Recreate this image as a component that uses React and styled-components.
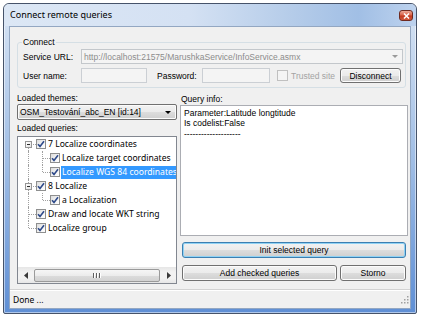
import React from 'react';
import styled, { createGlobalStyle } from 'styled-components';

const ui = `"Liberation Sans", Arial, sans-serif`;
const segoe = `"Noto Sans", "Open Sans", sans-serif`;

const GlobalStyle = createGlobalStyle`
  html, body { margin: 0; padding: 0; background: #fff; }
  body { font-family: ${ui}; }
  * { box-sizing: border-box; }
`;

const Window = styled.div`
  margin: 3px 0 0 3px;
  width: 414px;
  height: 311px;
  border: 1px solid #46536a;
  border-radius: 6px 6px 2px 2px;
  background: linear-gradient(180deg, #d9e5f4 0, #c9daf0 40px, #9fbde5 160px, #5f8fd5 100%);
  box-shadow: inset 0 0 0 1px rgba(255, 255, 255, 0.5);
  display: flex;
  flex-direction: column;
  padding: 0 5px 4px 5px;
  overflow: hidden;
`;

const TitleBar = styled.div`
  height: 22px;
  margin: 0 -5px;
  padding: 0 3px 0 6px;
  display: flex;
  align-items: flex-start;
  justify-content: space-between;
  background: linear-gradient(90deg, #dce7f5 0%, #d4e1f3 45%, #b5cce9 70%, #a1bfe5 86%, #bdd2ee 100%);
  border-radius: 5px 5px 0 0;
`;

const Title = styled.span`
  font-family: ${segoe};
  font-size: 9px;
  line-height: 22px;
  color: #000;
`;

const CloseButton = styled.div`
  margin-top: 6px;
  width: 14px;
  height: 11px;
  border: 1px solid #6f2a20;
  border-radius: 3px;
  background: linear-gradient(180deg, #eba897 0%, #d9634b 45%, #c23a20 55%, #d0573c 100%);
  display: flex;
  align-items: center;
  justify-content: center;
`;

const Client = styled.div`
  flex: 1;
  background: #f0f0f0;
  border: 1px solid #93a7c2;
  display: flex;
  flex-direction: column;
  font-family: ${ui};
  font-size: 8.5px;
  color: #000;
`;

const Group = styled.div`
  position: relative;
  margin: 15px 4px 0 7px;
  border: 1px solid #d5dfe5;
  border-radius: 3px;
  padding: 6px 2px 4px 5px;
  display: flex;
  flex-direction: column;
  gap: 4px;
`;

const GroupTitle = styled.span`
  position: absolute;
  top: -6px;
  left: 4px;
  padding: 0 1px;
  background: #f0f0f0;
  line-height: 11px;
`;

const FormRow = styled.div`
  display: flex;
  align-items: center;
  height: 15px;
`;

const Label = styled.span`
  width: ${(p) => p.$w || 'auto'};
  margin-left: ${(p) => p.$ml || '0'};
  color: ${(p) => (p.$disabled ? '#a3a3a3' : '#000')};
  white-space: nowrap;
  flex: none;
`;

const DisabledCombo = styled.div`
  flex: 1;
  height: 15px;
  border: 1px solid #c3c7cb;
  background: #f4f4f4;
  color: #8c8c8c;
  display: flex;
  align-items: center;
  justify-content: space-between;
  padding: 0 4px 0 2px;
`;

const Arrow = styled.span`
  width: 0;
  height: 0;
  border-left: ${(p) => p.$size}px solid transparent;
  border-right: ${(p) => p.$size}px solid transparent;
  border-top: ${(p) => p.$size}px solid ${(p) => p.$color};
`;

const TextBox = styled.div`
  width: ${(p) => p.$w}px;
  height: 15px;
  flex: none;
  border: 1px solid #cbcfd4;
  background: #f4f4f4;
`;

const CheckBox = styled.span`
  width: ${(p) => p.$size || 11}px;
  height: ${(p) => p.$size || 11}px;
  flex: none;
  margin-left: ${(p) => p.$ml || '0'};
  border: 1px solid ${(p) => (p.$disabled ? '#c0c0c0' : '#8e8f8f')};
  background: ${(p) =>
    p.$disabled ? '#f4f4f4' : 'linear-gradient(135deg, #dcdcdc 0%, #f4f4f4 60%, #fff 100%)'};
  display: flex;
  align-items: center;
  justify-content: center;
`;

const Button = styled.div`
  width: ${(p) => (p.$w ? `${p.$w}px` : 'auto')};
  flex: ${(p) => (p.$grow ? 1 : 'none')};
  height: ${(p) => p.$h || 15}px;
  margin-right: ${(p) => p.$mr || '0'};
  border: 1px solid ${(p) => (p.$focus ? '#3c7fb1' : '#707070')};
  border-radius: 3px;
  background: linear-gradient(180deg, #f2f2f2 0%, #ebebeb 50%, #dddddd 51%, #cfcfcf 100%);
  box-shadow: ${(p) => (p.$focus ? 'inset 0 0 0 1px #8fd2f4' : 'inset 0 0 0 1px #fcfcfc')};
  display: flex;
  align-items: center;
  justify-content: center;
  white-space: nowrap;
`;

const Spacer = styled.div`
  flex: 1;
`;

const Main = styled.div`
  flex: 1;
  display: flex;
  padding: 5px 2px 0 7px;
  gap: 3px;
`;

const Column = styled.div`
  width: ${(p) => p.$w}px;
  display: flex;
  flex-direction: column;
`;

const FieldLabel = styled.div`
  height: ${(p) => p.$h}px;
  line-height: ${(p) => p.$lh || p.$h}px;
  padding-left: ${(p) => p.$pl || 0}px;
  white-space: nowrap;
`;

const ThemeCombo = styled.div`
  height: 16px;
  border: 1px solid #707070;
  border-radius: 2px;
  background: linear-gradient(180deg, #f2f2f2 0%, #ebebeb 50%, #dddddd 51%, #cfcfcf 100%);
  box-shadow: inset 0 0 0 1px #fbfbfb;
  display: flex;
  align-items: center;
  justify-content: space-between;
  padding: 0 5px 0 2px;
  white-space: nowrap;
`;

const Tree = styled.div`
  height: 148px;
  border: 1px solid #828790;
  background: #fff;
  display: flex;
  flex-direction: column;
  overflow: hidden;
  font-family: ${segoe};
  font-size: 8.6px;
`;

const TreeRows = styled.div`
  flex: 1;
  padding-left: 4px;
`;

const TreeRow = styled.div`
  display: flex;
  align-items: center;
  height: 14px;
  white-space: nowrap;
`;

const Cell = styled.div`
  position: relative;
  width: 14px;
  height: 14px;
  flex: none;
  &::before {
    content: '';
    display: ${(p) => (p.$v ? 'block' : 'none')};
    position: absolute;
    left: 6px;
    top: ${(p) => (p.$v === 'bottom' ? '7px' : '0')};
    height: ${(p) => (p.$v === 'full' ? '14px' : '7px')};
    border-left: 1px dotted #a0a0a0;
  }
  &::after {
    content: '';
    display: ${(p) => (p.$h ? 'block' : 'none')};
    position: absolute;
    left: 7px;
    right: 0;
    top: 7px;
    border-top: 1px dotted #a0a0a0;
  }
`;

const Expander = styled.span`
  position: absolute;
  z-index: 1;
  left: 3px;
  top: 4px;
  width: 7px;
  height: 7px;
  border: 1px solid #969696;
  background: linear-gradient(135deg, #fff 0%, #e4e4e4 100%);
  &::after {
    content: '';
    position: absolute;
    left: 1px;
    top: 2px;
    width: 3px;
    border-top: 1px solid #2b2b2b;
  }
`;

const ItemText = styled.span`
  margin-left: 1px;
  padding: 0 1px;
  line-height: 13px;
  flex: ${(p) => (p.$selected ? 1 : 'none')};
  background: ${(p) => (p.$selected ? '#3399ff' : 'transparent')};
  color: ${(p) => (p.$selected ? '#fff' : '#000')};
`;

const HScroll = styled.div`
  height: 16px;
  display: flex;
  align-items: center;
  background: linear-gradient(180deg, #e6e6e6 0%, #f2f2f2 30%, #f2f2f2 70%, #e6e6e6 100%);
`;

const ScrollArrow = styled.div`
  width: 15px;
  height: 14px;
  flex: none;
  display: flex;
  align-items: center;
  justify-content: center;
`;

const Thumb = styled.div`
  flex: 1;
  height: 13px;
  margin: 0 1px;
  border: 1px solid #9a9a9a;
  border-radius: 2px;
  background: linear-gradient(180deg, #f6f6f6 0%, #ececec 50%, #dcdcdc 51%, #d2d2d2 100%);
  display: flex;
  align-items: center;
  justify-content: center;
  gap: 1px;
`;

const Grip = styled.span`
  width: 1px;
  height: 5px;
  background: #5f5f5f;
  box-shadow: 1px 0 0 #fff;
  margin-right: 1px;
`;

const InfoBox = styled.div`
  height: 131px;
  border: 1px solid #abadb3;
  background: #fff;
  padding: 2px 3px;
  line-height: 10.3px;
  white-space: pre;
`;

const ButtonRow = styled.div`
  display: flex;
  gap: 3px;
  margin: ${(p) => p.$mt}px 2px 0 2px;
`;

const StatusBar = styled.div`
  height: 19px;
  border-top: 1px solid #d2d2d2;
  box-shadow: inset 0 1px 0 #fff;
  display: flex;
  align-items: center;
  justify-content: space-between;
  padding: 0 1px 0 3px;
  font-family: ${segoe};
  font-size: 8.5px;
`;

const Check = ({ color = '#2e4a8a' }) => (
  <svg width="8" height="8" viewBox="0 0 8 8">
    <path d="M1 4.2 L3 6.4 L7 1.2" fill="none" stroke={color} strokeWidth="1.6" />
  </svg>
);

const rows = [
  { cells: [{ v: 'bottom', h: true, exp: true }], text: '7 Localize coordinates' },
  { cells: [{ v: 'full' }, { v: 'full', h: true }], text: 'Localize target coordinates' },
  { cells: [{ v: 'full' }, { v: 'top', h: true }], text: 'Localize WGS 84 coordinates', selected: true },
  { cells: [{ v: 'full', h: true, exp: true }], text: '8 Localize' },
  { cells: [{ v: 'full' }, { v: 'top', h: true }], text: 'a Localization' },
  { cells: [{ v: 'full', h: true }], text: 'Draw and locate WKT string' },
  { cells: [{ v: 'top', h: true }], text: 'Localize group' },
];

export default function App() {
  return (
    <>
      <GlobalStyle />
      <Window>
        <TitleBar>
          <Title>Connect remote queries</Title>
          <CloseButton>
            <svg width="7" height="6" viewBox="0 0 7 6">
              <path d="M1 0.5 L6 5.5 M6 0.5 L1 5.5" stroke="#fff" strokeWidth="1.5" />
            </svg>
          </CloseButton>
        </TitleBar>
        <Client>
          <Group>
            <GroupTitle>Connect</GroupTitle>
            <FormRow>
              <Label $w="58px">Service URL:</Label>
              <DisabledCombo>
                <span>http://localhost:21575/MarushkaService/InfoService.asmx</span>
                <Arrow $size={3} $color="#9a9a9a" />
              </DisabledCombo>
            </FormRow>
            <FormRow>
              <Label $w="58px">User name:</Label>
              <TextBox $w={66} />
              <Label $w="45px" $ml="10px">Password:</Label>
              <TextBox $w={68} />
              <CheckBox $disabled $ml="7px" />
              <Label $disabled $ml="3px">Trusted site</Label>
              <Spacer />
              <Button $w={61} $mr="2px">Disconnect</Button>
            </FormRow>
          </Group>
          <Main>
            <Column $w={160}>
              <FieldLabel $h={11}>Loaded themes:</FieldLabel>
              <ThemeCombo>
                <span>OSM_Testování_abc_EN [id:14]</span>
                <Arrow $size={3.5} $color="#000" />
              </ThemeCombo>
              <FieldLabel $h={16} $lh={17}>Loaded queries:</FieldLabel>
              <Tree>
                <TreeRows>
                  {rows.map((r, i) => (
                    <TreeRow key={i}>
                      {r.cells.map((c, j) => (
                        <Cell key={j} $v={c.v} $h={c.h}>
                          {c.exp && <Expander />}
                        </Cell>
                      ))}
                      <CheckBox $size={10}>
                        <Check />
                      </CheckBox>
                      <ItemText $selected={r.selected}>{r.text}</ItemText>
                    </TreeRow>
                  ))}
                </TreeRows>
                <HScroll>
                  <ScrollArrow>
                    <svg width="4" height="7" viewBox="0 0 4 7">
                      <path d="M4 0 L0 3.5 L4 7 Z" fill="#3a3a3a" />
                    </svg>
                  </ScrollArrow>
                  <Thumb>
                    <Grip />
                    <Grip />
                    <Grip />
                  </Thumb>
                  <ScrollArrow>
                    <svg width="4" height="7" viewBox="0 0 4 7">
                      <path d="M0 0 L4 3.5 L0 7 Z" fill="#3a3a3a" />
                    </svg>
                  </ScrollArrow>
                </HScroll>
              </Tree>
            </Column>
            <Column $w={228}>
              <FieldLabel $h={12} $pl={1}>Query info:</FieldLabel>
              <InfoBox>
                {'Parameter:Latitude longtitude\nIs codelist:False\n--------------------'}
              </InfoBox>
              <ButtonRow $mt={6}>
                <Button $grow $focus $h={16}>Init selected query</Button>
              </ButtonRow>
              <ButtonRow $mt={7}>
                <Button $grow $h={16}>Add checked queries</Button>
                <Button $w={66} $h={16}>Storno</Button>
              </ButtonRow>
            </Column>
          </Main>
          <StatusBar>
            <span>Done ...</span>
            <svg width="9" height="9" viewBox="0 0 9 9">
              {[[7, 1], [7, 4], [4, 4], [7, 7], [4, 7], [1, 7]].map(([x, y], k) => (
                <rect key={k} x={x} y={y} width="1.5" height="1.5" fill="#a0a0a0" />
              ))}
            </svg>
          </StatusBar>
        </Client>
      </Window>
    </>
  );
}
